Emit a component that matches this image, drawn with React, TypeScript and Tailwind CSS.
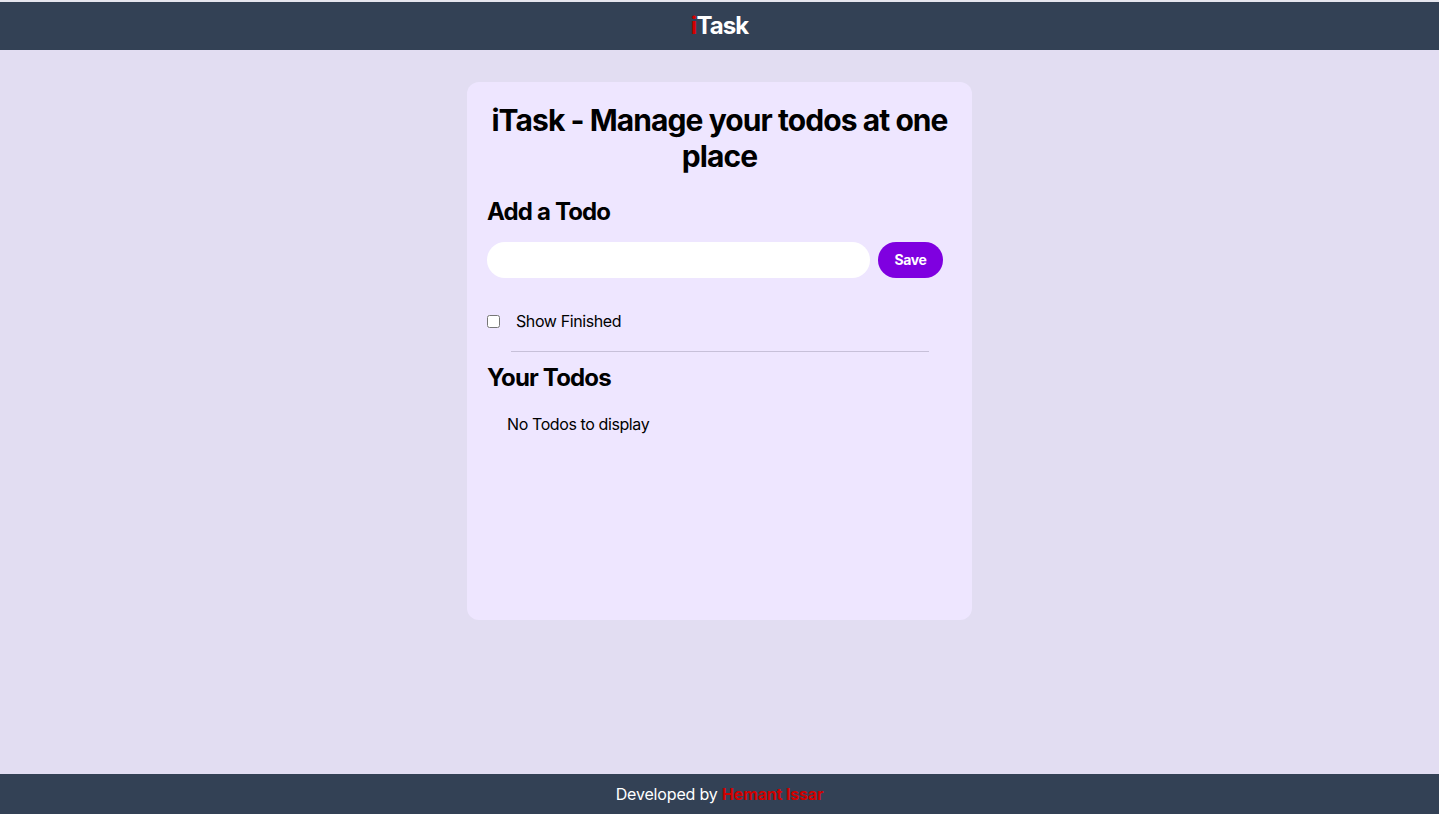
import { useState } from 'react';

function Navbar() {
  return (
    <nav className="border-t-2 border-[#e6e6ee] bg-[#334155] h-[50px] flex items-center justify-center">
      <div className="text-2xl font-bold text-white tracking-[-0.04em]">
        <span className="text-[#d10000]">i</span>Task
      </div>
    </nav>
  );
}

function App() {
  const [todo, setTodo] = useState('');
  const [showFinished, setShowFinished] = useState(false);
  const todos: string[] = [];

  return (
    <div className="min-h-screen flex flex-col bg-[#e2ddf2] font-['Inter','Liberation_Sans',sans-serif] text-black tracking-[-0.025em]">
      <Navbar />

      <main className="flex-1">
        <div className="mx-auto mt-8 w-[505px] h-[538px] rounded-xl bg-[#eee6ff] p-5">
          <h1 className="text-center text-3xl font-bold leading-9 tracking-[-0.031em]">iTask - Manage your todos at one place</h1>

          <div className="mt-[22px] flex flex-col gap-[14px]">
            <h2 className="text-2xl font-bold leading-8 tracking-[-0.035em]">Add a Todo</h2>
            <div className="flex items-center gap-2">
              <input
                type="text"
                value={todo}
                onChange={e => setTodo(e.target.value)}
                className="w-[383px] h-9 rounded-full bg-white px-5 py-1 outline-none"
              />
              <button className="h-9 w-[65px] rounded-full bg-[#7f00e0] text-sm font-bold text-white">
                Save
              </button>
            </div>
          </div>

          <label className="mt-[31px] flex items-center gap-4 leading-6">
            <input
              type="checkbox"
              checked={showFinished}
              onChange={() => setShowFinished(!showFinished)}
              className="h-[13px] w-[13px]"
            />
            Show Finished
          </label>

          <div className="mx-auto mt-[18px] w-[418px] h-px bg-[#c7c0d9]"></div>

          <h2 className="mt-[10px] text-2xl font-bold leading-8 tracking-[-0.035em]">Your Todos</h2>

          <div className="mt-[18px]">
            {todos.length === 0 && <div className="ml-5 leading-6">No Todos to display</div>}
          </div>
        </div>
      </main>

      <footer className="h-10 bg-[#334155] flex items-center justify-center text-white tracking-[-0.01em]">
        Developed by&nbsp;<span className="text-[#d10000] font-bold">Hemant Issar</span>
      </footer>
    </div>
  );
}

export default App;
